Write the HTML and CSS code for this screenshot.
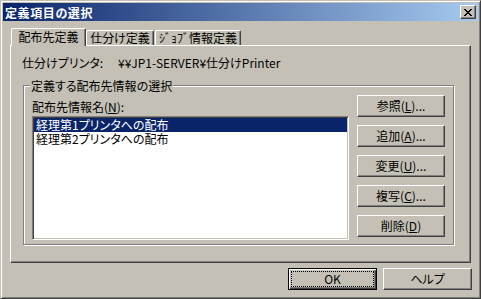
FILE: index.html
```html
<!DOCTYPE html>
<html lang="ja">
<head>
  <meta charset="UTF-8">
  <title>定義項目の選択</title>
  <link rel="stylesheet" href="styles.css">
</head>
<body>
  <div class="dialog">
    <div class="titlebar">
      <span class="title">定義項目の選択</span>
      <span class="close">
        <svg width="8" height="7" viewBox="0 0 8 7" shape-rendering="crispEdges">
          <path d="M0 0h2v1H0zM6 0h2v1H6zM1 1h2v1H1zM5 1h2v1H5zM2 2h4v1H2zM3 3h2v1H3zM2 4h4v1H2zM1 5h2v1H1zM5 5h2v1H5zM0 6h2v1H0zM6 6h2v1H6z" fill="#000"/>
        </svg>
      </span>
    </div>

    <div class="body">
      <div class="tabs">
        <div class="tab active">配布先定義</div>
        <div class="tab tab-2">仕分け定義</div>
        <div class="tab tab-3">ｼﾞｮﾌﾞ情報定義</div>
      </div>

      <div class="panel">
        <div class="printer">
          <span class="key">仕分けプリンタ:</span>
          <span>¥¥JP1-SERVER¥仕分けPrinter</span>
        </div>

        <fieldset class="group">
          <legend>定義する配布先情報の選択</legend>
          <div class="list-col">
            <div class="label">配布先情報名(<u>N</u>):</div>
            <ul class="listbox">
              <li class="selected">経理第1プリンタへの配布</li>
              <li>経理第2プリンタへの配布</li>
            </ul>
          </div>
          <div class="btn-col">
            <button class="btn">参照(<u>L</u>)...</button>
            <button class="btn">追加(<u>A</u>)...</button>
            <button class="btn">変更(<u>U</u>)...</button>
            <button class="btn">複写(<u>C</u>)...</button>
            <button class="btn">削除(<u>D</u>)</button>
          </div>
        </fieldset>
      </div>

      <div class="footer">
        <button class="btn default">OK</button>
        <button class="btn">ヘルプ</button>
      </div>
    </div>
  </div>
</body>
</html>
```

FILE: styles.css
```css
body { margin: 0; background: #c4c0b5; font-family: "Noto Sans CJK JP", "Liberation Sans", sans-serif; font-size: 12px; line-height: 13px; color: #000; font-feature-settings: "palt"; }
.dialog { width: 481px; height: 299px; box-sizing: border-box; border: 1px solid; border-color: #c4c0b5 #404040 #404040 #c4c0b5; box-shadow: inset 1px 1px #fff, inset -1px -1px #808080; padding: 2px; background: #c4c0b5; display: flex; flex-direction: column; }

.titlebar { height: 18px; display: flex; align-items: center; justify-content: space-between; padding: 0 2px 0 2px; background: linear-gradient(to right, #0a246a, #a6caf0); }
.title { color: #fff; font-weight: bold; letter-spacing: 0.6px; }
.close { width: 16px; height: 14px; box-sizing: border-box; display: flex; align-items: center; justify-content: center; background: #c4c0b5; border: 1px solid; border-color: #fff #404040 #404040 #fff; box-shadow: inset -1px -1px #808080; }

.body { flex: 1; padding: 7px 7px 0 7px; display: flex; flex-direction: column; }

.tabs { height: 17px; display: flex; align-items: flex-end; position: relative; z-index: 1; }
.tab { height: 15px; box-sizing: border-box; border: 1px solid; border-bottom: 0; border-color: #fff #404040 #fff #fff; border-radius: 2px 2px 0 0; box-shadow: inset -1px 0 #808080; text-align: center; line-height: 14px; background: #c4c0b5; }
.tab.active { height: 18px; width: 75px; margin: 0 0 -1px 1px; line-height: 16px; }
.tab-2 { width: 68px; }
.tab-3 { width: 86px; margin-left: 1px; }

.panel { height: 218px; box-sizing: border-box; border: 1px solid; border-color: #fff #404040 #404040 #fff; box-shadow: inset -1px -1px #808080; padding: 10px 0 0 11px; }
.printer { display: flex; }
.printer .key { width: 96px; }

.group { margin: 10px 16px 0 1px; padding: 3px 8px 4px 8px; border: 1px solid #808080; box-shadow: inset 1px 1px #fff, 1px 1px #fff; display: flex; min-width: 0; }
.group legend { padding: 0 1px; margin-left: -2px; background: #c4c0b5; line-height: 13px; }

.list-col { width: 317px; }
.label { margin-top: 5px; }
.listbox { width: 317px; height: 124px; box-sizing: border-box; margin: 3px 0 0; padding: 1px; list-style: none; background: #fff; border: 1px solid; border-color: #808080 #fff #fff #808080; box-shadow: inset 1px 1px #404040, inset -1px -1px #c4c0b5; }
.listbox li { height: 14px; line-height: 14px; padding-left: 2px; white-space: nowrap; }
.listbox li.selected { background: #0a246a; color: #fff; }

.btn-col { margin-left: 8px; display: flex; flex-direction: column; gap: 8px; }
.btn { width: 88px; height: 22px; box-sizing: border-box; padding: 0; font: inherit; line-height: 18px; color: #000; background: #c4c0b5; border: 1px solid; border-color: #fff #404040 #404040 #fff; box-shadow: inset -1px -1px #808080; text-align: center; }

.footer { display: flex; justify-content: flex-end; gap: 6px; margin: 5px -1px 0 0; }
.footer .btn { width: 89px; }
.btn.default { border-color: #000; box-shadow: inset 1px 1px #fff, inset -1px -1px #404040, inset -2px -2px #808080; outline: 1px dotted #000; outline-offset: -4px; }
```
